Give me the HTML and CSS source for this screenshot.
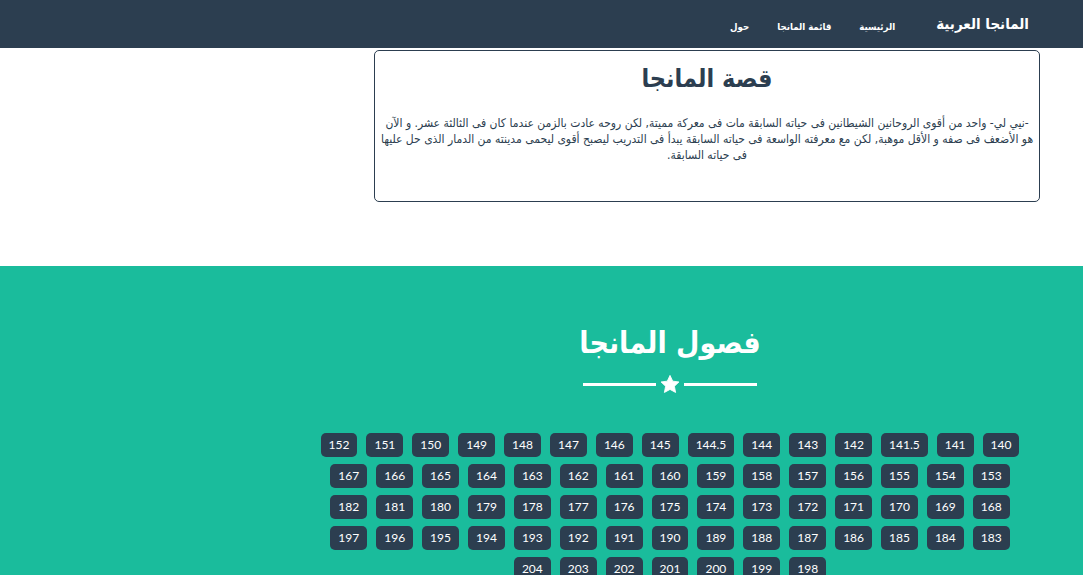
FILE: index.html
```html
<!DOCTYPE html>
<html lang="ar" dir="rtl">
<head>
<meta charset="utf-8">
<title>المانجا العربية</title>
<link rel="stylesheet" href="styles.css">
</head>
<body>
<nav class="navbar">
  <a class="brand" href="#">المانجا العربية</a>
  <ul class="nav-links">
    <li><a href="#">الرئيسية</a></li>
    <li><a href="#">قائمة المانجا</a></li>
    <li><a href="#">حول</a></li>
  </ul>
</nav>

<section class="story-wrap">
  <div class="story-card">
    <h2 class="story-title">قصة المانجا</h2>
    <p class="story-text">-نيي لي- واحد من أقوى الروحانين الشيطانين فى حياته السابقة مات فى معركة مميتة, لكن روحه عادت بالزمن عندما كان فى الثالثة عشر. و الآن هو الأضعف فى صفه و الأقل موهبة, لكن مع معرفته الواسعة فى حياته السابقة يبدأ فى التدريب ليصبح أقوى ليحمى مدينته من الدمار الذى حل عليها فى حياته السابقة.</p>
  </div>
</section>

<section class="chapters">
  <div class="chapters-inner">
    <h2 class="chapters-title">فصول المانجا</h2>
    <div class="divider">
      <span class="line"></span>
      <svg class="star" viewBox="0 0 24 24" width="22" height="21"><path d="M12 1.6l3.1 6.6 7.1.9-5.2 4.9 1.4 7.1L12 17.6l-6.4 3.5 1.4-7.1L1.8 9.1l7.1-.9z" fill="#fff" stroke="#fff" stroke-width="1" stroke-linejoin="round"/></svg>
      <span class="line"></span>
    </div>
    <div class="chapter-list">
      <a class="ch" href="#">140</a><a class="ch" href="#">141</a><a class="ch" href="#">141.5</a><a class="ch" href="#">142</a><a class="ch" href="#">143</a><a class="ch" href="#">144</a><a class="ch" href="#">144.5</a><a class="ch" href="#">145</a><a class="ch" href="#">146</a><a class="ch" href="#">147</a><a class="ch" href="#">148</a><a class="ch" href="#">149</a><a class="ch" href="#">150</a><a class="ch" href="#">151</a><a class="ch" href="#">152</a>
      <a class="ch" href="#">153</a><a class="ch" href="#">154</a><a class="ch" href="#">155</a><a class="ch" href="#">156</a><a class="ch" href="#">157</a><a class="ch" href="#">158</a><a class="ch" href="#">159</a><a class="ch" href="#">160</a><a class="ch" href="#">161</a><a class="ch" href="#">162</a><a class="ch" href="#">163</a><a class="ch" href="#">164</a><a class="ch" href="#">165</a><a class="ch" href="#">166</a><a class="ch" href="#">167</a>
      <a class="ch" href="#">168</a><a class="ch" href="#">169</a><a class="ch" href="#">170</a><a class="ch" href="#">171</a><a class="ch" href="#">172</a><a class="ch" href="#">173</a><a class="ch" href="#">174</a><a class="ch" href="#">175</a><a class="ch" href="#">176</a><a class="ch" href="#">177</a><a class="ch" href="#">178</a><a class="ch" href="#">179</a><a class="ch" href="#">180</a><a class="ch" href="#">181</a><a class="ch" href="#">182</a>
      <a class="ch" href="#">183</a><a class="ch" href="#">184</a><a class="ch" href="#">185</a><a class="ch" href="#">186</a><a class="ch" href="#">187</a><a class="ch" href="#">188</a><a class="ch" href="#">189</a><a class="ch" href="#">190</a><a class="ch" href="#">191</a><a class="ch" href="#">192</a><a class="ch" href="#">193</a><a class="ch" href="#">194</a><a class="ch" href="#">195</a><a class="ch" href="#">196</a><a class="ch" href="#">197</a>
      <a class="ch" href="#">198</a><a class="ch" href="#">199</a><a class="ch" href="#">200</a><a class="ch" href="#">201</a><a class="ch" href="#">202</a><a class="ch" href="#">203</a><a class="ch" href="#">204</a>
    </div>
  </div>
</section>
</body>
</html>
```

FILE: styles.css
```css
* { box-sizing: border-box; }
html, body { margin: 0; padding: 0; }
body {
  font-family: "Lato", "DejaVu Sans", sans-serif;
  background: #fff;
  color: #2c3e50;
  overflow: hidden;
}
a { text-decoration: none; }

.navbar {
  height: 48px;
  background: #2c3e50;
  display: flex;
  align-items: center;
  padding-right: 54px;
}
.brand {
  color: #fff;
  font-size: 15px;
  font-weight: bold;
  font-family: "DejaVu Sans Condensed", "DejaVu Sans", sans-serif;
  margin-left: 41px;
}
.nav-links {
  list-style: none;
  margin: 0;
  padding: 0 0 2px;
  display: flex;
  gap: 28px;
}
.nav-links a {
  color: #fff;
  font-size: 9.6px;
  font-weight: bold;
  font-family: "DejaVu Sans Condensed", "DejaVu Sans", sans-serif;
}

.story-wrap {
  display: flex;
  justify-content: flex-start;
  padding: 2px 43px 0 0;
  height: 218px;
}
.story-card {
  width: 666px;
  height: 152px;
  border: 1px solid #2c3e50;
  border-radius: 5px;
  padding: 12px 4px 0;
  text-align: center;
}
.story-title {
  margin: 0;
  font-family: "DejaVu Sans Condensed", "DejaVu Sans", sans-serif;
  font-size: 25px;
  line-height: 32px;
  font-weight: bold;
  color: #2c3e50;
}
.story-text {
  margin: 20px 0 0;
  font-family: "DejaVu Sans Condensed", "DejaVu Sans", sans-serif;
  font-size: 12px;
  line-height: 16px;
  color: #2c3e50;
}

.chapters {
  background: #1abc9c;
  height: 309px;
  padding-left: 257px;
}
.chapters-inner {
  display: flex;
  flex-direction: column;
  align-items: center;
  padding-top: 58px;
}
.chapters-title {
  margin: 0;
  color: #fff;
  font-family: "DejaVu Sans Condensed", "DejaVu Sans", sans-serif;
  font-size: 30px;
  line-height: 38px;
  font-weight: bold;
}
.divider {
  display: flex;
  align-items: center;
  gap: 3px;
  margin-top: 12px;
}
.line {
  display: block;
  width: 73px;
  height: 3px;
  background: #fff;
}
.star { display: block; }

.chapter-list {
  margin-top: 38px;
  width: 710px;
  display: flex;
  flex-wrap: wrap;
  justify-content: center;
  gap: 7px 9px;
}
.ch {
  display: block;
  background: #2c3e50;
  color: #fff;
  font-family: "Lato", sans-serif;
  font-size: 12px;
  line-height: 16px;
  padding: 4px 8px;
  border-radius: 5px;
}
```
